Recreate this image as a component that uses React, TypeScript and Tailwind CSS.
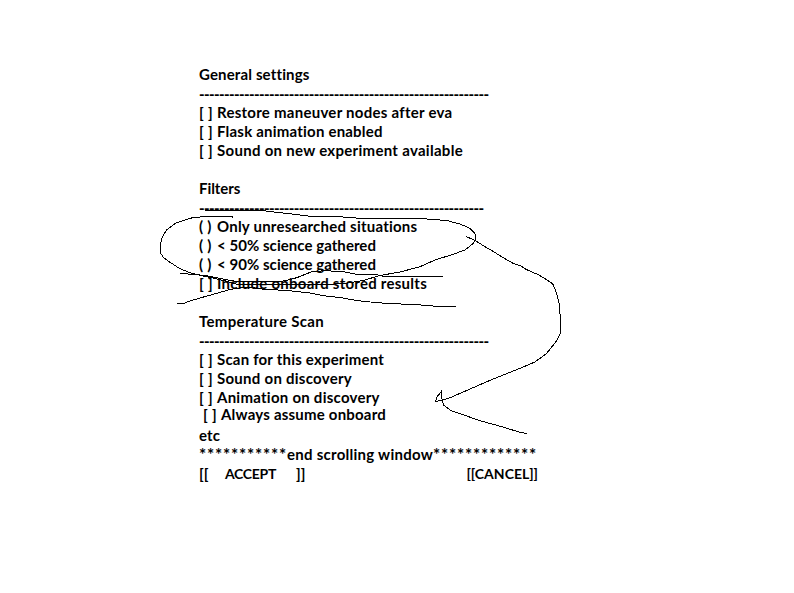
type RowProps = { mark?: string; label: string; tracking: string; className?: string };

function Row({ mark, label, tracking, className = "" }: RowProps) {
  return (
    <div className={`flex h-[19px] ${className}`}>
      {mark && <span className="w-[18px] shrink-0 tracking-[0.3px]">{mark}</span>}
      <span className={tracking}>{label}</span>
    </div>
  );
}

function Rule({ count }: { count: number }) {
  return <div className="h-[19px] pt-px font-black leading-[18px] tracking-[-0.61px]">{"-".repeat(count)}</div>;
}

function Scribbles() {
  return (
    <svg
      className="pointer-events-none absolute left-0 top-0"
      width="794"
      height="593"
      fill="none"
      stroke="#000"
      strokeWidth="1"
      shapeRendering="crispEdges"
    >
      {/* loop around the radio filters */}
      <polyline points="232.5,217.5 232.5,216.5 205,216.5 192.5,217.7 183,220.5 175,223.5 166.5,230 162.5,236.5 160.5,243.5 160.5,253 163.5,257.5 170,262.3 180,268.7 190,272.7 200,275.3 213,278 226.7,281.3 237,284.3 330,284.3 350,282.8 363,280.5 380,275.5 400,272 420,266.7 435,260 453,254.3 465,250 473.3,243.3 475.5,240 475.5,234.3 470,228.3 460,224 446.7,220.5 420,218.5 360,218.3 336.7,216.5 310,216.3 290,213.7 266.7,211.3 263,210.3 205,210.3" />
      {/* strokes crossing out the stored results option */}
      <polyline points="180,273.5 193,274.3 206.7,275.7 226.7,279.7 236.7,281.5 280,281.5 287,280.3 296.7,277.7 311.7,271.7 325,270.7 343,271.7 356.7,274.3 376.7,274.7 384,276.5 442.5,276.5" />
      <polyline points="177,303.5 184,303.3 190,301 200,298 216.7,293.3 230,289.5 241.7,287.5 255,288 265,289.5 286,290.3 310,293 323,295.7 340,297.5 356.7,300.5 375,302.5 390,303.6 415,304.5 436.7,306.3 455.7,306.5" />
      {/* arrow down to the temperature section */}
      <polyline points="466,236.5 475,240.3 483.3,245.7 491.7,250.5 500,255.7 513.3,263.5 520,265.5 526.7,269.7 538.3,274.7 545,278.7 552.7,283.7 556.7,293.3 559,303.3 560.5,319.3 560.5,333.3 556.7,340.7 546.7,353.3 535,362 520,368.3 486.7,381.7 463.3,392 450,397.7 442.7,400 435.5,401.5 436.7,397.3 441.5,391.3 441.5,397 443.5,405 451.7,411 466.7,416 480,420.7 501.7,426.7 520,432.3 526.7,433.4" />
    </svg>
  );
}

export default function App() {
  return (
    <div className="relative h-[593px] w-[794px] overflow-hidden bg-white pl-[199px] pt-[65px] font-['Lato','Liberation_Sans',sans-serif] text-[15px] font-bold leading-[19px] whitespace-pre text-black">
      <section className="h-[114px]">
        <Row label="General settings" tracking="tracking-[0.141px]" />
        <Rule count={58} />
        <Row mark="[ ]" label="Restore maneuver nodes after eva" tracking="tracking-[0.262px]" />
        <Row mark="[ ]" label="Flask animation enabled" tracking="tracking-[0.211px]" />
        <Row mark="[ ]" label="Sound on new experiment available" tracking="tracking-[0.292px]" />
      </section>
      <section className="h-[133px]">
        <Row label="Filters" tracking="tracking-[-0.05px]" />
        <Rule count={57} />
        <Row mark="( )" label="Only unresearched situations" tracking="tracking-[0.22px]" />
        <Row mark="( )" label="< 50% science gathered" tracking="tracking-[0.049px]" />
        <Row mark="( )" label="< 90% science gathered" tracking="tracking-[0.049px]" />
        <Row mark="[ ]" label="Include onboard stored results" tracking="tracking-[0.254px]" />
      </section>
      <section>
        <Row label="Temperature Scan" tracking="tracking-[0.319px]" />
        <Rule count={58} />
        <Row mark="[ ]" label="Scan for this experiment" tracking="tracking-[0.202px]" />
        <Row mark="[ ]" label="Sound on discovery" tracking="tracking-[0.266px]" />
        <Row mark="[ ]" label="Animation on discovery" tracking="tracking-[0.253px]" />
        <Row mark="[ ]" label="Always assume onboard" tracking="tracking-[0.207px]" className="-mt-[2px] mb-[2px] pl-1" />
        <Row label="etc" tracking="tracking-[0.104px]" />
      </section>
      <div className="flex h-[19px]">
        <span className="w-[88px] text-[17px] tracking-[0.77px]">{"*".repeat(11)}</span>
        <span className="w-[146px] tracking-[0.261px]">end scrolling window</span>
        <span className="text-[17px] tracking-[0.77px]">{"*".repeat(13)}</span>
      </div>
      <div className="flex h-[19px] w-[339px]">
        <span className="w-[26px]">[[</span>
        <span className="w-[71px] text-[14px] tracking-[-0.3px]">ACCEPT</span>
        <span>]]</span>
        <span className="ml-auto text-[14px]">[[CANCEL]]</span>
      </div>
      <Scribbles />
    </div>
  );
}
